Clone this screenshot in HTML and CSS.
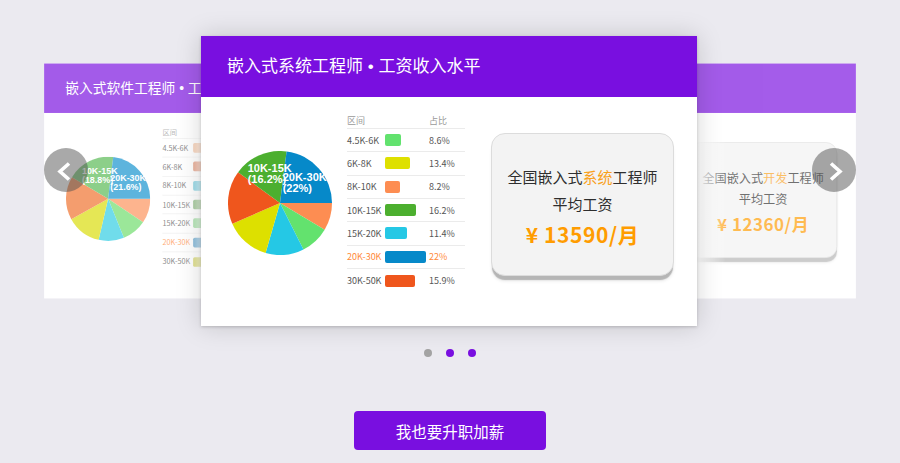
FILE: index.html
```html
<!DOCTYPE html>
<html lang="zh-CN">
<head>
<meta charset="utf-8">
<title>嵌入式工程师工资收入水平</title>
<link rel="stylesheet" href="styles.css">
</head>
<body>
<div class="stage">
  <div class="card side left">
    <div class="card-head">嵌入式软件工程师 • 工资收入水平</div>
    <div class="card-body">
      <svg class="pie" width="104" height="104" viewBox="0 0 104 104">
        <path d="M52 52 L104 52 A52 52 0 0 1 95.11 81.08 Z" fill="#fd9159"/>
        <path d="M52 52 L95.11 81.08 A52 52 0 0 1 71.48 100.21 Z" fill="#6cdd6a"/>
        <path d="M52 52 L71.48 100.21 A52 52 0 0 1 40.30 102.67 Z" fill="#2dcce3"/>
        <path d="M52 52 L40.30 102.67 A52 52 0 0 1 6.52 77.21 Z" fill="#d9dd05"/>
        <path d="M52 52 L6.52 77.21 A52 52 0 0 1 7.43 25.22 Z" fill="#f0702a"/>
        <path d="M52 52 L7.43 25.22 A52 52 0 0 1 58.34 0.39 Z" fill="#56b952"/>
        <path d="M52 52 L58.34 0.39 A52 52 0 0 1 104 52 Z" fill="#1192ce"/>
        <text class="pie-label" x="19.7" y="21">10K-15K</text>
        <text class="pie-label" x="19.7" y="32">(18.8%)</text>
        <text class="pie-label" x="54.7" y="30">20K-30K</text>
        <text class="pie-label" x="54.7" y="41">(21.6%)</text>
      </svg>
      <div class="table">
        <div class="row head"><span class="c1">区间</span><span class="c2"></span><span class="c3">占比</span></div>
        <div class="row"><span class="c1">4.5K-6K</span><span class="c2"><i class="bar" style="width:18px;background:#f0a06c"></i></span><span class="c3">9.6%</span></div>
        <div class="row"><span class="c1">6K-8K</span><span class="c2"><i class="bar" style="width:28px;background:#d15324"></i></span><span class="c3">14.9%</span></div>
        <div class="row"><span class="c1">8K-10K</span><span class="c2"><i class="bar" style="width:20px;background:#20aecc"></i></span><span class="c3">10.4%</span></div>
        <div class="row"><span class="c1">10K-15K</span><span class="c2"><i class="bar" style="width:35px;background:#428f2e"></i></span><span class="c3">18.8%</span></div>
        <div class="row"><span class="c1">15K-20K</span><span class="c2"><i class="bar" style="width:26px;background:#5ac65c"></i></span><span class="c3">13.6%</span></div>
        <div class="row hl"><span class="c1">20K-30K</span><span class="c2"><i class="bar" style="width:41px;background:#006eb2"></i></span><span class="c3">21.6%</span></div>
        <div class="row"><span class="c1">30K-50K</span><span class="c2"><i class="bar" style="width:21px;background:#baba00"></i></span><span class="c3">11.1%</span></div>
      </div>
      <div class="stat">
        <p class="stat-line">全国嵌入式<em>软件</em>工程师</p>
        <p class="stat-line">平均工资</p>
        <p class="stat-price">¥ 12870/月</p>
      </div>
    </div>
  </div>

  <div class="card main">
    <div class="card-head">嵌入式系统工程师 • 工资收入水平</div>
    <div class="card-body">
      <svg class="pie" width="104" height="104" viewBox="0 0 104 104">
        <path d="M52 52 L104 52 A52 52 0 0 1 96.65 78.67 Z" fill="#fd8d52"/>
        <path d="M52 52 L96.65 78.67 A52 52 0 0 1 75.45 98.42 Z" fill="#63e26e"/>
        <path d="M52 52 L75.45 98.42 A52 52 0 0 1 37.60 101.97 Z" fill="#25c8e5"/>
        <path d="M52 52 L37.60 101.97 A52 52 0 0 1 4.32 72.74 Z" fill="#dde000"/>
        <path d="M52 52 L4.32 72.74 A52 52 0 0 1 10.09 21.22 Z" fill="#ef561d"/>
        <path d="M52 52 L10.09 21.22 A52 52 0 0 1 58.55 0.42 Z" fill="#4caf2f"/>
        <path d="M52 52 L58.55 0.42 A52 52 0 0 1 104 52 Z" fill="#0689c9"/>
        <text class="pie-label" x="19.7" y="21">10K-15K</text>
        <text class="pie-label" x="19.7" y="32">(16.2%)</text>
        <text class="pie-label" x="54.7" y="30">20K-30K</text>
        <text class="pie-label" x="54.7" y="41">(22%)</text>
      </svg>
      <div class="table">
        <div class="row head"><span class="c1">区间</span><span class="c2"></span><span class="c3">占比</span></div>
        <div class="row"><span class="c1">4.5K-6K</span><span class="c2"><i class="bar" style="width:16px;background:#62e26e"></i></span><span class="c3">8.6%</span></div>
        <div class="row"><span class="c1">6K-8K</span><span class="c2"><i class="bar" style="width:25px;background:#dee000"></i></span><span class="c3">13.4%</span></div>
        <div class="row"><span class="c1">8K-10K</span><span class="c2"><i class="bar" style="width:15px;background:#fd8d52"></i></span><span class="c3">8.2%</span></div>
        <div class="row"><span class="c1">10K-15K</span><span class="c2"><i class="bar" style="width:31px;background:#4caf2f"></i></span><span class="c3">16.2%</span></div>
        <div class="row"><span class="c1">15K-20K</span><span class="c2"><i class="bar" style="width:22px;background:#25c8e5"></i></span><span class="c3">11.4%</span></div>
        <div class="row hl"><span class="c1">20K-30K</span><span class="c2"><i class="bar" style="width:41px;background:#0689c9"></i></span><span class="c3">22%</span></div>
        <div class="row"><span class="c1">30K-50K</span><span class="c2"><i class="bar" style="width:30px;background:#ef561d"></i></span><span class="c3">15.9%</span></div>
      </div>
      <div class="stat">
        <p class="stat-line">全国嵌入式<em>系统</em>工程师</p>
        <p class="stat-line">平均工资</p>
        <p class="stat-price">¥ 13590/月</p>
      </div>
    </div>
  </div>

  <div class="card side right">
    <div class="card-head">嵌入式开发工程师 • 工资收入水平</div>
    <div class="card-body">
      <svg class="pie" width="104" height="104" viewBox="0 0 104 104">
        <path d="M52 52 L104 52 A52 52 0 0 1 95.11 81.08 Z" fill="#fd8d52"/>
        <path d="M52 52 L95.11 81.08 A52 52 0 0 1 71.48 100.21 Z" fill="#63e26e"/>
        <path d="M52 52 L71.48 100.21 A52 52 0 0 1 40.30 102.67 Z" fill="#25c8e5"/>
        <path d="M52 52 L40.30 102.67 A52 52 0 0 1 6.52 77.21 Z" fill="#dde000"/>
        <path d="M52 52 L6.52 77.21 A52 52 0 0 1 7.43 25.22 Z" fill="#ef561d"/>
        <path d="M52 52 L7.43 25.22 A52 52 0 0 1 58.34 0.39 Z" fill="#4caf2f"/>
        <path d="M52 52 L58.34 0.39 A52 52 0 0 1 104 52 Z" fill="#0689c9"/>
      </svg>
      <div class="table">
        <div class="row head"><span class="c1">区间</span><span class="c2"></span><span class="c3">占比</span></div>
        <div class="row"><span class="c1">4.5K-6K</span><span class="c2"><i class="bar" style="width:18px;background:#62e26e"></i></span><span class="c3">9.4%</span></div>
        <div class="row"><span class="c1">6K-8K</span><span class="c2"><i class="bar" style="width:27px;background:#dee000"></i></span><span class="c3">14.1%</span></div>
        <div class="row"><span class="c1">8K-10K</span><span class="c2"><i class="bar" style="width:18px;background:#fd8d52"></i></span><span class="c3">9.3%</span></div>
        <div class="row"><span class="c1">10K-15K</span><span class="c2"><i class="bar" style="width:33px;background:#4caf2f"></i></span><span class="c3">17.5%</span></div>
        <div class="row"><span class="c1">15K-20K</span><span class="c2"><i class="bar" style="width:24px;background:#25c8e5"></i></span><span class="c3">12.6%</span></div>
        <div class="row hl"><span class="c1">20K-30K</span><span class="c2"><i class="bar" style="width:37px;background:#0689c9"></i></span><span class="c3">19.8%</span></div>
        <div class="row"><span class="c1">30K-50K</span><span class="c2"><i class="bar" style="width:24px;background:#ef561d"></i></span><span class="c3">12.7%</span></div>
      </div>
      <div class="stat">
        <p class="stat-line">全国嵌入式<em>开发</em>工程师</p>
        <p class="stat-line">平均工资</p>
        <p class="stat-price">¥ 12360/月</p>
      </div>
    </div>
  </div>

  <button class="arrow prev" aria-label="上一个">
    <svg width="44" height="44" viewBox="0 0 44 44"><polyline points="25,15.5 16,23.5 25,31.5" fill="none" stroke="#fff" stroke-width="3.6"/></svg>
  </button>
  <button class="arrow next" aria-label="下一个">
    <svg width="44" height="44" viewBox="0 0 44 44"><polyline points="19,15.5 28,23.5 19,31.5" fill="none" stroke="#fff" stroke-width="3.6"/></svg>
  </button>
</div>

<div class="dots">
  <span class="dot"></span>
  <span class="dot on"></span>
  <span class="dot on"></span>
</div>

<button class="cta">我也要升职加薪</button>
</body>
</html>
```

FILE: styles.css
```css
* {
  box-sizing: border-box;
  margin: 0;
  padding: 0;
}

body {
  width: 900px;
  height: 463px;
  overflow: hidden;
  background: #ebeaf0;
  font-family: "Noto Sans CJK SC", "Liberation Sans", sans-serif;
  color: #333;
}

.stage {
  position: relative;
  display: grid;
  justify-items: center;
  padding-top: 36px;
  height: 326px;
}

.card {
  grid-area: 1 / 1;
  position: relative;
  width: 496px;
  height: 290px;
  background: #fff;
  display: flex;
  flex-direction: column;
}

.main {
  z-index: 2;
  transform: translateX(-1px);
  box-shadow: 0 0 24px rgba(0, 0, 0, 0.17), 0 1px 3px rgba(0, 0, 0, 0.18);
}

.side {
  z-index: 1;
}

.side > * {
  opacity: 0.68;
}

.left {
  transform: translateX(-205px) scale(0.81);
}

.right {
  transform: translateX(205px) scale(0.81);
}

.card-head {
  height: 61px;
  flex: none;
  background: #790fe0;
  color: #fff;
  font-family: "Liberation Sans", "Noto Sans CJK SC", sans-serif;
  font-size: 17px;
  line-height: 61px;
  padding-left: 26px;
  white-space: nowrap;
}

.card-body {
  position: relative;
  flex: 1;
  display: flex;
  align-items: flex-start;
  padding-left: 27px;
}

.left .card-body::after,
.right .card-body::after {
  content: "";
  position: absolute;
  inset: 0;
}

.left .card-body::after {
  background: linear-gradient(to right, rgba(255, 255, 255, 0) 172px, rgba(255, 255, 255, 0.7) 196px);
}

.right .card-body::after {
  background: linear-gradient(to right, #fff 298px, rgba(255, 255, 255, 0) 335px);
}

.pie {
  flex: none;
  margin-top: 54px;
  display: block;
}

.pie-label {
  font-family: "Liberation Sans", "DejaVu Sans", sans-serif;
  font-weight: bold;
  font-size: 11px;
  fill: #fff;
}

.table {
  flex: none;
  width: 118px;
  margin-left: 15px;
  margin-top: 15px;
  font-size: 9px;
  color: #555;
}

.row {
  display: flex;
  align-items: center;
  height: 23.33px;
  border-bottom: 1px solid #ebebeb;
}

.row:last-child {
  border-bottom: 0;
}

.row.head {
  height: 17px;
  color: #9a9a9a;
}

.row.hl {
  color: #ff8a3a;
}

.c1 {
  width: 38px;
  flex: none;
  white-space: nowrap;
}

.c2 {
  width: 44px;
  flex: none;
  display: flex;
  align-items: center;
}

.c3 {
  flex: 1;
  white-space: nowrap;
}

.bar {
  display: block;
  height: 12px;
  border-radius: 2px;
}

.stat {
  flex: none;
  width: 183px;
  height: 143px;
  margin-left: 26px;
  margin-top: 36px;
  background: #f3f3f3;
  border: 1px solid #dcdcdc;
  border-radius: 14px;
  box-shadow: 0 5px 1px -1px #b5b5b5, 0 6px 4px -2px rgba(0, 0, 0, 0.15);
  padding-top: 29px;
  text-align: center;
}

.stat-line {
  font-size: 15px;
  line-height: 27px;
  color: #2e2e2e;
  white-space: nowrap;
}

.stat-line em {
  font-style: normal;
  color: #f9a11b;
}

.stat-price {
  margin-top: 2px;
  font-size: 21px;
  line-height: 30px;
  font-weight: bold;
  color: #ff9c00;
  letter-spacing: 0.6px;
  white-space: nowrap;
}

.arrow {
  position: absolute;
  top: 148px;
  z-index: 3;
  width: 44px;
  height: 44px;
  border: 0;
  border-radius: 50%;
  background: rgba(80, 80, 80, 0.49);
  display: flex;
  align-items: center;
  justify-content: center;
}

.arrow svg {
  display: block;
}

.prev {
  left: 44px;
}

.next {
  left: 812px;
}

.dots {
  display: flex;
  justify-content: center;
  gap: 14px;
  margin-top: 23px;
}

.dot {
  width: 8px;
  height: 8px;
  border-radius: 50%;
  background: #a3a3a3;
}

.dot.on {
  background: #790fe0;
}

.cta {
  display: block;
  width: 192px;
  height: 39px;
  margin: 54px auto 0;
  border: 0;
  border-radius: 4px;
  background: #790fe0;
  color: #fff;
  font-family: "Noto Sans CJK SC", "Liberation Sans", sans-serif;
  font-size: 15.5px;
}
```
